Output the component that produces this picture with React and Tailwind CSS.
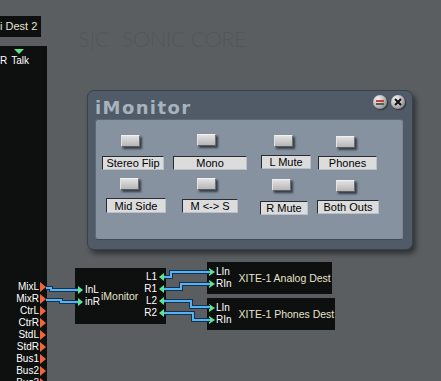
import React from "react";

const F = "font-['Liberation_Sans',Arial,sans-serif]";

function TriR({ color = "#5ee68c", w = 5, h = 8 }) {
  return (
    <svg width={w} height={h} className="block shrink-0">
      <polygon points={`0,0 ${w},${h / 2} 0,${h}`} fill={color} />
    </svg>
  );
}
function TriL({ color = "#5ee68c", w = 5, h = 8 }) {
  return (
    <svg width={w} height={h} className="block shrink-0">
      <polygon points={`${w},0 0,${h / 2} ${w},${h}`} fill={color} />
    </svg>
  );
}

function Btn({ cls }) {
  return (
    <div
      className={`w-[19px] h-[12px] bg-linear-to-b from-[#e2e2e2] to-[#b6b6b6] border border-t-[#f2f2f2] border-l-[#e4e4e4] border-r-[#707070] border-b-[#5c5c5c] shadow-[2px_2px_2px_rgba(24,32,42,0.75)] ${cls}`}
    />
  );
}

function Lab({ text, cls }) {
  return (
    <div
      className={`h-[14px] flex items-center justify-center bg-[#dcdcdc] border border-t-[#262c33] border-l-[#262c33] border-r-[#b9c0c8] border-b-[#b9c0c8] text-[11px] leading-[12px] text-black ${F} ${cls}`}
    >
      {text}
    </div>
  );
}

function Cable({ d }) {
  return (
    <g>
      <path d={d} fill="none" stroke="#17304c" strokeWidth="4" strokeLinejoin="miter" />
      <path d={d} fill="none" stroke="#52b4f6" strokeWidth="2" strokeLinejoin="miter" />
    </g>
  );
}

export default function App() {
  const ports = ["MixL", "MixR", "CtrL", "CtrR", "StdL", "StdR", "Bus1", "Bus2", "Bus3"];
  return (
    <div className="relative w-[441px] h-[381px] overflow-hidden bg-[#5a5e61]">
      {/* logo */}
      <div className="absolute left-[78px] top-[26px] flex items-start text-[#52575a] font-['Lato',sans-serif] font-light text-[22px] leading-[26px]">
        <span>S</span>
        <span className="w-[1px] h-[21px] bg-[#52575a] mx-[2px] mt-[5px]" />
        <span>C</span>
        <span className="ml-[12px] tracking-[-0.6px]">SONIC CORE</span>
      </div>

      {/* top-left box */}
      <div className={`absolute left-0 top-[16px] w-[41px] h-[21px] bg-[#0e100f] flex items-center text-[11px] text-[#e6e2d0] ${F} whitespace-nowrap overflow-hidden`}>
        i Dest 2
      </div>

      {/* left module */}
      <div className={`absolute left-0 top-[46px] w-[47px] h-[335px] bg-[#0e100f] flex flex-col ${F}`}>
        <div className="ml-[14px] mt-[3px]">
          <svg width="10" height="5" className="block">
            <polygon points="0,0 10,0 5,5" fill="#5ee68c" />
          </svg>
        </div>
        <div className="flex text-[10px] leading-[10px] text-white mt-[2px]">
          <span>R</span>
          <span className="ml-[4px]">Talk</span>
        </div>
        <div className="mt-[215px] flex flex-col">
          {ports.map((p) => (
            <div key={p} className="h-[12px] flex items-center justify-end pr-[1px]">
              <span className="text-[10px] leading-[10px] text-white mr-[1px]">{p}</span>
              <TriR color="#f0663c" w={6} h={10} />
            </div>
          ))}
        </div>
      </div>

      {/* iMonitor module */}
      <div className={`absolute left-[75px] top-[268px] w-[91px] h-[56px] bg-[#0e100f] flex items-center ${F}`}>
        <div className="flex flex-col ml-[3px] mt-[-1px]">
          {["InL", "inR"].map((p) => (
            <div key={p} className="h-[12px] flex items-center">
              <TriR />
              <span className="ml-[2px] text-[10px] leading-[10px] text-white">{p}</span>
            </div>
          ))}
        </div>
        <div className="ml-[1px] text-[10.5px] leading-[12px] text-[#e6e2cc]">iMonitor</div>
        <div className="ml-auto mr-[2px] flex flex-col mt-[-2px]">
          {["L1", "R1", "L2", "R2"].map((p) => (
            <div key={p} className="h-[12px] flex items-center justify-end">
              <span className="mr-[2px] text-[10px] leading-[10px] text-white">{p}</span>
              <TriL />
            </div>
          ))}
        </div>
      </div>

      {/* XITE modules */}
      {[
        { t: "XITE-1 Analog Dest", cls: "top-[262px] w-[125px]", pt: "mt-[-1px]" },
        { t: "XITE-1 Phones Dest", cls: "top-[298px] w-[128px]", pt: "mt-[0px]" },
      ].map((m) => (
        <div key={m.t} className={`absolute left-[207px] h-[32px] bg-[#0e100f] flex items-center ${F} ${m.cls}`}>
          <div className={`flex flex-col ml-[2px] ${m.pt}`}>
            {["LIn", "RIn"].map((p) => (
              <div key={p} className="h-[12px] flex items-center">
                <TriR w={6} h={8} />
                <span className="ml-[1px] text-[10px] leading-[10px] text-white">{p}</span>
              </div>
            ))}
          </div>
          <div className="ml-[7px] text-[10.5px] leading-[12px] text-[#e6e2cc] whitespace-nowrap">{m.t}</div>
        </div>
      ))}

      {/* cables */}
      <svg className="absolute left-0 top-0 pointer-events-none" width="441" height="381" shapeRendering="crispEdges">
        <Cable d="M46,288 H51 V290 H78" />
        <Cable d="M46,300 H61 V302 H78" />
        <Cable d="M164,277 H171 V272 H210" />
        <Cable d="M164,289 H181 V284 H210" />
        <Cable d="M164,301 H191 V307 H210" />
        <Cable d="M164,313 H193 V320 H210" />
      </svg>

      {/* iMonitor window */}
      <div className="absolute left-[87px] top-[90px] w-[326px] h-[160px] rounded-[7px] bg-[#505b67] border border-[#39424c] shadow-[3px_4px_5px_rgba(0,0,0,0.45)] flex flex-col">
        <div className="h-[28px] flex items-start justify-between pl-[7px] pr-[7px] pt-[4px]">
          <div className="mt-[4px] font-['DejaVu_Sans',sans-serif] font-bold text-[18px] leading-[18px] tracking-[1.4px] text-[#a7b2be]">
            iMonitor
          </div>
          <div className="flex gap-[4px]">
            <div className="w-[14px] h-[14px] rounded-full bg-radial-[at_35%_30%] from-[#f4f4f4] via-[#b8b8b8] to-[#5c5c5c] flex flex-col items-center justify-center gap-[1px] shadow-[1px_1px_1px_rgba(0,0,0,0.5)]">
              <div className="w-[8px] h-[2px] bg-[#c8403a]" />
              <div className="w-[8px] h-[2px] bg-[#5a5a5a]" />
            </div>
            <div className="w-[14px] h-[14px] rounded-full bg-radial-[at_35%_30%] from-[#f4f4f4] via-[#b8b8b8] to-[#5c5c5c] flex items-center justify-center shadow-[1px_1px_1px_rgba(0,0,0,0.5)]">
              <svg width="8" height="8" className="block">
                <path d="M1,1 L7,7 M7,1 L1,7" stroke="#111" strokeWidth="2" />
              </svg>
            </div>
          </div>
        </div>
        <div className="ml-[7px] mr-[9px] h-[121px] rounded-[3px] bg-[#8792a1] border border-t-[#5d6874] border-l-[#5d6874] border-r-[#7b8695] border-b-[#3f4853] flex pl-[6px]">
          {/* col1 */}
          <div className="w-[71px] flex flex-col items-start">
            <Btn cls="mt-[15px] ml-[19px]" />
            <Lab text="Stereo Flip" cls="mt-[9px] w-[62px]" />
            <Btn cls="mt-[8px] ml-[18px]" />
            <Lab text="Mid Side" cls="mt-[8px] ml-[4px] w-[60px] h-[15px]" />
          </div>
          {/* col2 */}
          <div className="w-[87px] flex flex-col items-start">
            <Btn cls="mt-[14px] ml-[24px]" />
            <Lab text="Mono" cls="mt-[10px] w-[74px]" />
            <Btn cls="mt-[8px] ml-[24px]" />
            <Lab text="M <-> S" cls="mt-[9px] ml-[9px] w-[56px]" />
          </div>
          {/* col3 */}
          <div className="w-[57px] flex flex-col items-start">
            <Btn cls="mt-[15px] ml-[14px]" />
            <Lab text="L Mute" cls="mt-[8px] ml-[1px] w-[50px]" />
            <Btn cls="mt-[10px] ml-[12px]" />
            <Lab text="R Mute" cls="mt-[10px] w-[48px]" />
          </div>
          {/* col4 */}
          <div className="flex flex-col items-start">
            <Btn cls="mt-[16px] ml-[19px]" />
            <Lab text="Phones" cls="mt-[8px] ml-[1px] w-[59px]" />
            <Btn cls="mt-[10px] ml-[19px]" />
            <Lab text="Both Outs" cls="mt-[8px] w-[62px]" />
          </div>
        </div>
      </div>
    </div>
  );
}
